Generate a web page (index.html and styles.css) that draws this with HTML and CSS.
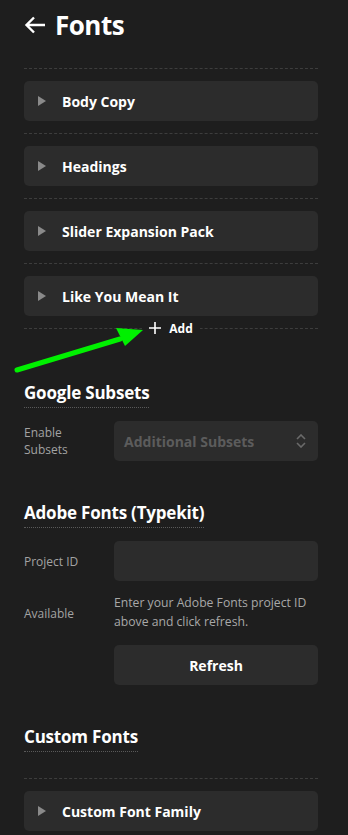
FILE: index.html
```html
<html lang="en">

<head>
    <meta charset="UTF-8">
    <meta name="viewport" content="width=device-width, initial-scale=1.0">
    <title>Fonts</title>
    <link rel="stylesheet" href="styles.css">
</head>

<body>
    <div class="panel">
        <h1 class="title">
            <svg class="back" width="22" height="20" viewBox="0 0 22 20">
                <path d="M21 10H3M10 2.5L2.5 10L10 17.5" fill="none" stroke="#fff" stroke-width="2.4" />
            </svg>
            Fonts
        </h1>

        <div class="font-list">
            <div class="font-item">
                <div class="card"><span class="caret"></span>Body Copy</div>
            </div>
            <div class="font-item">
                <div class="card"><span class="caret"></span>Headings</div>
            </div>
            <div class="font-item">
                <div class="card"><span class="caret"></span>Slider Expansion Pack</div>
            </div>
            <div class="font-item">
                <div class="card"><span class="caret"></span>Like You Mean It</div>
            </div>
            <div class="add-row">
                <span class="add-btn">
                    <svg width="12" height="12" viewBox="0 0 12 12">
                        <path d="M6 0V12M0 6H12" stroke="#fff" stroke-width="1.6" />
                    </svg>
                    Add
                </span>
            </div>
        </div>

        <h2 class="section-title">Google Subsets</h2>
        <div class="field">
            <label class="field-label">Enable<br>Subsets</label>
            <div class="select">
                Additional Subsets
                <svg width="10" height="14" viewBox="0 0 10 14">
                    <path d="M1 5L5 1L9 5M1 9L5 13L9 9" fill="none" stroke="#6a6a6a" stroke-width="1.6" />
                </svg>
            </div>
        </div>

        <h2 class="section-title">Adobe Fonts (Typekit)</h2>
        <div class="field">
            <label class="field-label">Project ID</label>
            <input class="text-input" type="text">
        </div>
        <div class="field">
            <label class="field-label">Available</label>
            <p class="help">Enter your Adobe Fonts project ID above and click refresh.</p>
        </div>
        <div class="field">
            <span class="field-label"></span>
            <button class="button">Refresh</button>
        </div>

        <h2 class="section-title">Custom Fonts</h2>
        <div class="font-list custom">
            <div class="font-item">
                <div class="card"><span class="caret"></span>Custom Font Family</div>
            </div>
        </div>

        <svg class="pointer" width="140" height="50" viewBox="0 0 140 50">
            <path d="M5 45L108 14" stroke="#00f000" stroke-width="5" stroke-linecap="round" />
            <path d="M104 3L131 5L113 21Z" fill="#00f000" />
        </svg>
    </div>
</body>

</html>
```

FILE: styles.css
```css
body {
    margin: 0;
    background-color: #1e1e1e;
    color: #ffffff;
    font-family: "Open Sans", "Noto Sans", sans-serif;
}

.panel {
    position: relative;
    padding: 0 30px 0 24px;
}

.title {
    display: flex;
    align-items: center;
    gap: 9px;
    margin: 0;
    height: 68px;
    padding-bottom: 18px;
    box-sizing: border-box;
    font-size: 26px;
    font-weight: 700;
    letter-spacing: -0.5px;
}

.font-item {
    border-top: 1px dashed #3d3d3d;
    padding: 12px 0;
}

.card {
    display: flex;
    align-items: center;
    height: 40px;
    padding-left: 14px;
    background-color: #2c2c2c;
    border-radius: 5px;
    font-size: 14px;
    font-weight: 700;
}

.caret {
    width: 0;
    height: 0;
    border-top: 5px solid transparent;
    border-bottom: 5px solid transparent;
    border-left: 8px solid #8a8a8a;
    margin-right: 16px;
}

.add-row {
    border-top: 1px dashed #3d3d3d;
    display: flex;
    justify-content: center;
    align-items: flex-start;
    height: 1px;
    padding-bottom: 11px;
}

.add-btn {
    display: flex;
    align-items: center;
    gap: 8px;
    height: 16px;
    margin-top: -9px;
    padding: 0 7px;
    background-color: #1e1e1e;
    font-size: 12px;
    font-weight: 700;
}

.custom {
    margin-top: 26px;
}

.section-title {
    width: fit-content;
    margin: 40px 0 13px;
    padding-bottom: 2px;
    border-bottom: 1px dotted #5a5a5a;
    font-size: 17px;
    font-weight: 700;
    line-height: 24px;
    letter-spacing: -0.2px;
}

.field {
    display: flex;
    align-items: center;
    margin-bottom: 12px;
}

.field-label {
    flex: 0 0 90px;
    color: #a3a3a3;
    font-size: 12px;
    line-height: 17px;
}

.select {
    flex: 1;
    display: flex;
    align-items: center;
    justify-content: space-between;
    height: 40px;
    padding: 0 12px 0 10px;
    background-color: #2c2c2c;
    border-radius: 5px;
    color: #5c5c5c;
    font-size: 14px;
    font-weight: 700;
}

.text-input {
    flex: 1;
    height: 40px;
    border: none;
    border-radius: 5px;
    background-color: #2c2c2c;
}

.help {
    flex: 1;
    margin: 0;
    padding-bottom: 2px;
    color: #a8a8a8;
    font-size: 12.2px;
    line-height: 19px;
}

.button {
    flex: 1;
    height: 40px;
    border: none;
    border-radius: 5px;
    background-color: #2c2c2c;
    color: #ffffff;
    font-family: inherit;
    font-size: 14px;
    font-weight: 700;
}

.pointer {
    position: absolute;
    left: 12px;
    top: 325px;
}
```
